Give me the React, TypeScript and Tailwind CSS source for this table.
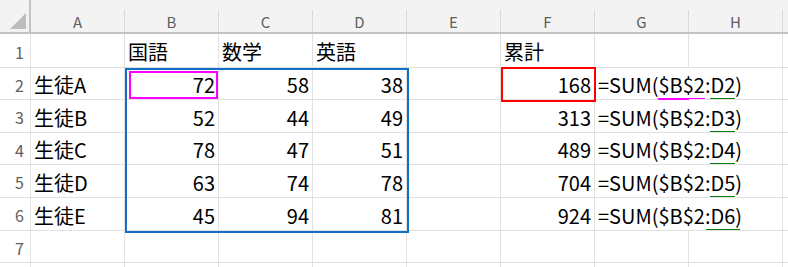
import React from "react";

type Seg = { text: string; bar?: string; barClass?: string };

const cols = ["A", "B", "C", "D", "E", "F", "G", "H"];

const rows: { names: string[]; nums: (number | null)[]; total: number | null }[] = [
  { names: ["生徒A"], nums: [72, 58, 38], total: 168 },
  { names: ["生徒B"], nums: [52, 44, 49], total: 313 },
  { names: ["生徒C"], nums: [78, 47, 51], total: 489 },
  { names: ["生徒D"], nums: [63, 74, 78], total: 704 },
  { names: ["生徒E"], nums: [45, 94, 81], total: 924 },
];

const grid = "border-[#e1e1e1]";

function Formula({ row }: { row: number }) {
  const segs: Seg[] = [
    { text: "=SUM(" },
    row === 2 ? { text: "$B$2", bar: "bg-[#ff00ff]" } : { text: "$B$2" },
    { text: ":" },
    {
      text: `D${row}`,
      bar: "bg-[#0a7d0a]",
      barClass: row === 6 ? "-left-[4px] -right-[5px]" : "left-0 right-0",
    },
    { text: ")" },
  ];
  return (
    <div className="flex h-full items-stretch whitespace-nowrap">
      {segs.map((s, i) => (
        <span key={i} className="relative flex items-center pt-[3px]">
          {s.text}
          {s.bar && (
            <span
              className={`absolute bottom-[-1px] h-[2px] ${s.bar} ${s.barClass ?? "left-0 right-0"}`}
            />
          )}
        </span>
      ))}
    </div>
  );
}

function Cell({
  children,
  right,
  noRightBorder,
}: {
  children?: React.ReactNode;
  right?: boolean;
  noRightBorder?: boolean;
}) {
  return (
    <div
      className={`relative flex items-center border-b ${noRightBorder ? "" : "border-r"} ${grid} px-[3px] pt-[3px] whitespace-nowrap ${
        right ? "justify-end" : "justify-start"
      }`}
    >
      {children}
    </div>
  );
}

function RowHead({ n }: { n: number }) {
  return (
    <div
      className={`flex items-center justify-end border-b border-r ${grid} pr-[6px] pt-[2px] text-[16px] text-[#5e5e5e]`}
    >
      {n}
    </div>
  );
}

export default function App() {
  return (
    <div className="relative h-[267px] w-[788px] overflow-hidden bg-white font-['Noto_Sans_CJK_JP','Noto_Sans',sans-serif] text-[20px] leading-[20px] text-black">
      <div className="grid h-full grid-cols-[31px_repeat(8,94px)_1fr] grid-rows-[34px_34px_32px_33px_32px_33px_33px_32px_1fr]">
        {/* corner */}
        <div className="relative border-b-2 border-r-2 border-[#c3c3c3] bg-[#f3f3f3]">
          <svg className="absolute bottom-[3px] right-[3px]" width="16" height="16" viewBox="0 0 16 16">
            <polygon points="16,0 16,16 0,16" fill="#bdbdbd" />
          </svg>
        </div>
        {/* column headers */}
        {cols.map((c) => (
          <div key={c} className="flex flex-col border-b-2 border-[#c3c3c3] bg-[#f3f3f3]">
            <div className="mt-[10px] flex flex-1 items-center justify-center border-r border-[#d9d9d9] pt-[1px] text-[15px] text-[#5e5e5e]">
              {c}
            </div>
          </div>
        ))}
        <div className="border-b-2 border-[#c3c3c3] bg-[#f3f3f3]" />

        {/* row 1 */}
        <RowHead n={1} />
        <Cell />
        <Cell>国語</Cell>
        <Cell>数学</Cell>
        <Cell>英語</Cell>
        <Cell />
        <Cell>累計</Cell>
        <Cell />
        <Cell />
        <div className={`border-b ${grid}`} />

        {/* rows 2-6 */}
        {rows.map((r, i) => {
          const n = i + 2;
          return (
            <React.Fragment key={n}>
              <RowHead n={n} />
              <Cell>{r.names[0]}</Cell>
              {r.nums.map((v, j) => (
                <Cell key={j} right>
                  {v}
                </Cell>
              ))}
              <Cell />
              <Cell right>{r.total}</Cell>
              <div className={`relative border-b ${grid} px-[3px]`}>
                <Formula row={n} />
              </div>
              <Cell />
              <div className={`border-b ${grid}`} />
            </React.Fragment>
          );
        })}

        {/* row 7 */}
        <RowHead n={7} />
        {cols.map((c) => (
          <Cell key={c} />
        ))}
        <div className={`border-b ${grid}`} />

        {/* partial row 8 */}
        <div className={`border-r ${grid}`} />
        {cols.map((c) => (
          <div key={c} className={`border-r ${grid}`} />
        ))}
        <div />
      </div>

      {/* selection outlines */}
      <div className="pointer-events-none absolute left-[125px] top-[68px] h-[165px] w-[284px] border-2 border-[#1070c4]" />
      <div className="pointer-events-none absolute left-[129px] top-[71px] h-[28px] w-[89px] border-2 border-[#ff00ff]" />
      <div className="pointer-events-none absolute left-[501px] top-[67px] h-[35px] w-[95px] border-2 border-[#ff0000]" />
    </div>
  );
}
